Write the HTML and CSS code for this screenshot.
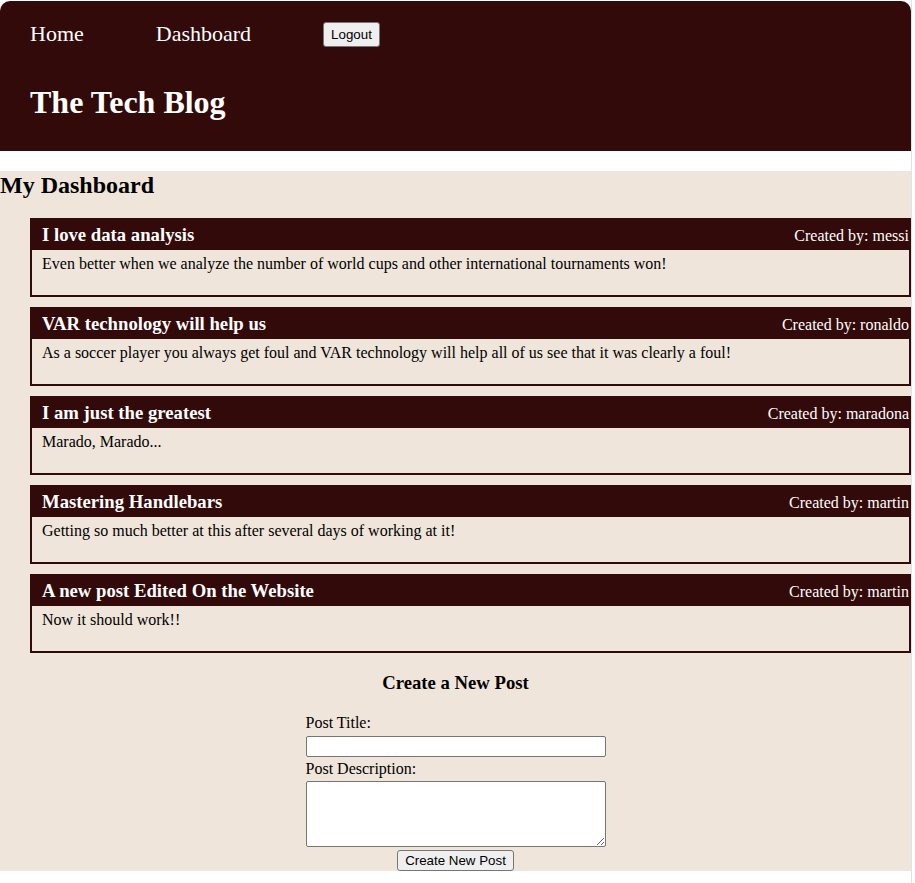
FILE: index.html
```html
<!DOCTYPE html>
<html lang="en">
<head>
<meta charset="utf-8">
<title>The Tech Blog</title>
<link rel="stylesheet" href="styles.css">
</head>
<body>
<div class="page">
  <header class="site-header">
    <nav class="nav">
      <a class="nav-link" href="#">Home</a>
      <a class="nav-link" href="#">Dashboard</a>
      <button class="btn logout-btn" type="button">Logout</button>
    </nav>
    <h1 class="site-title">The Tech Blog</h1>
  </header>
  <main class="main">
    <h2 class="page-title">My Dashboard</h2>
    <div class="posts">
      <article class="post">
        <div class="post-head"><h3 class="post-title">I love data analysis</h3><span class="post-author">Created by: messi</span></div>
        <div class="post-body">Even better when we analyze the number of world cups and other international tournaments won!</div>
      </article>
      <article class="post">
        <div class="post-head"><h3 class="post-title">VAR technology will help us</h3><span class="post-author">Created by: ronaldo</span></div>
        <div class="post-body">As a soccer player you always get foul and VAR technology will help all of us see that it was clearly a foul!</div>
      </article>
      <article class="post">
        <div class="post-head"><h3 class="post-title">I am just the greatest</h3><span class="post-author">Created by: maradona</span></div>
        <div class="post-body">Marado, Marado...</div>
      </article>
      <article class="post">
        <div class="post-head"><h3 class="post-title">Mastering Handlebars</h3><span class="post-author">Created by: martin</span></div>
        <div class="post-body">Getting so much better at this after several days of working at it!</div>
      </article>
      <article class="post">
        <div class="post-head"><h3 class="post-title">A new post Edited On the Website</h3><span class="post-author">Created by: martin</span></div>
        <div class="post-body">Now it should work!!</div>
      </article>
    </div>
    <h3 class="form-title">Create a New Post</h3>
    <form class="new-post">
      <label class="field-label" for="post-title">Post Title:</label>
      <input class="field-input" id="post-title" type="text">
      <label class="field-label gap" for="post-desc">Post Description:</label>
      <textarea class="field-area" id="post-desc"></textarea>
      <button class="btn submit-btn" type="submit">Create New Post</button>
    </form>
  </main>
</div>
</body>
</html>
```
FILE: styles.css
```css
html, body {
  margin: 0;
  padding: 0;
  background: #ffffff;
}
body {
  font-family: "Liberation Serif", "Times New Roman", serif;
  font-size: 16px;
  color: #000;
}
.page {
  width: 911px;
  min-height: 100vh;
  border-right: 1px solid #e2e2e2;
  padding-top: 1px;
}
.site-header {
  background: #330a0a;
  border-radius: 10px 10px 0 0;
  padding: 20px 30px 30px;
  margin-bottom: 20px;
}
.nav {
  display: flex;
  align-items: center;
  gap: 72px;
  height: 26px;
}
.nav-link {
  color: #ffffff;
  text-decoration: none;
  font-size: 22px;
  line-height: 26px;
}
.btn {
  font-family: "Liberation Sans", Arial, sans-serif;
  font-size: 13.333px;
  line-height: 15px;
  color: #000;
  background: #efefef;
  border: 1px solid #767676;
  border-radius: 3px;
}
.logout-btn {
  padding: 4px 7px;
}
.site-title {
  margin: 37px 0 0;
  font-size: 32px;
  line-height: 37px;
  font-weight: bold;
  color: #ffffff;
}
.main {
  background: #efe5da;
}
.page-title {
  margin: 0;
  font-size: 24px;
  line-height: 28px;
  font-weight: bold;
}
.posts {
  display: flex;
  flex-direction: column;
  gap: 10px;
  margin: 19px 0 0 30px;
}
.post {
  border: 2px solid #330a0a;
}
.post-head {
  background: #330a0a;
  color: #ffffff;
  display: flex;
  justify-content: space-between;
  align-items: center;
  padding: 4px 0 4px 10px;
  line-height: 22px;
  height: 22px;
}
.post-title {
  margin: 0;
  font-size: 18.72px;
  font-weight: bold;
}
.post-author {
  font-size: 16px;
  padding-top: 1px;
}
.post-body {
  padding: 5px 10px 22px;
  line-height: 18px;
}
.form-title {
  margin: 19px 0 0;
  text-align: center;
  font-size: 18.72px;
  line-height: 22px;
  font-weight: bold;
}
.new-post {
  width: 300px;
  margin: 0 auto;
  display: flex;
  flex-direction: column;
}
.field-label {
  display: block;
  margin-top: 20px;
  line-height: 18px;
}
.field-label.gap {
  margin-top: 3px;
}
.field-input,
.field-area {
  box-sizing: border-box;
  width: 300px;
  border: 1px solid #767676;
  border-radius: 2px;
  background: #ffffff;
  font-family: "Liberation Mono", monospace;
  font-size: 13.333px;
}
.field-input {
  height: 21px;
  margin-top: 4px;
  padding: 1px 2px;
}
.field-area {
  height: 66px;
  margin-top: 3px;
  padding: 2px;
}
.submit-btn {
  align-self: center;
  margin-top: 3px;
  padding: 2px 7px;
}
```
